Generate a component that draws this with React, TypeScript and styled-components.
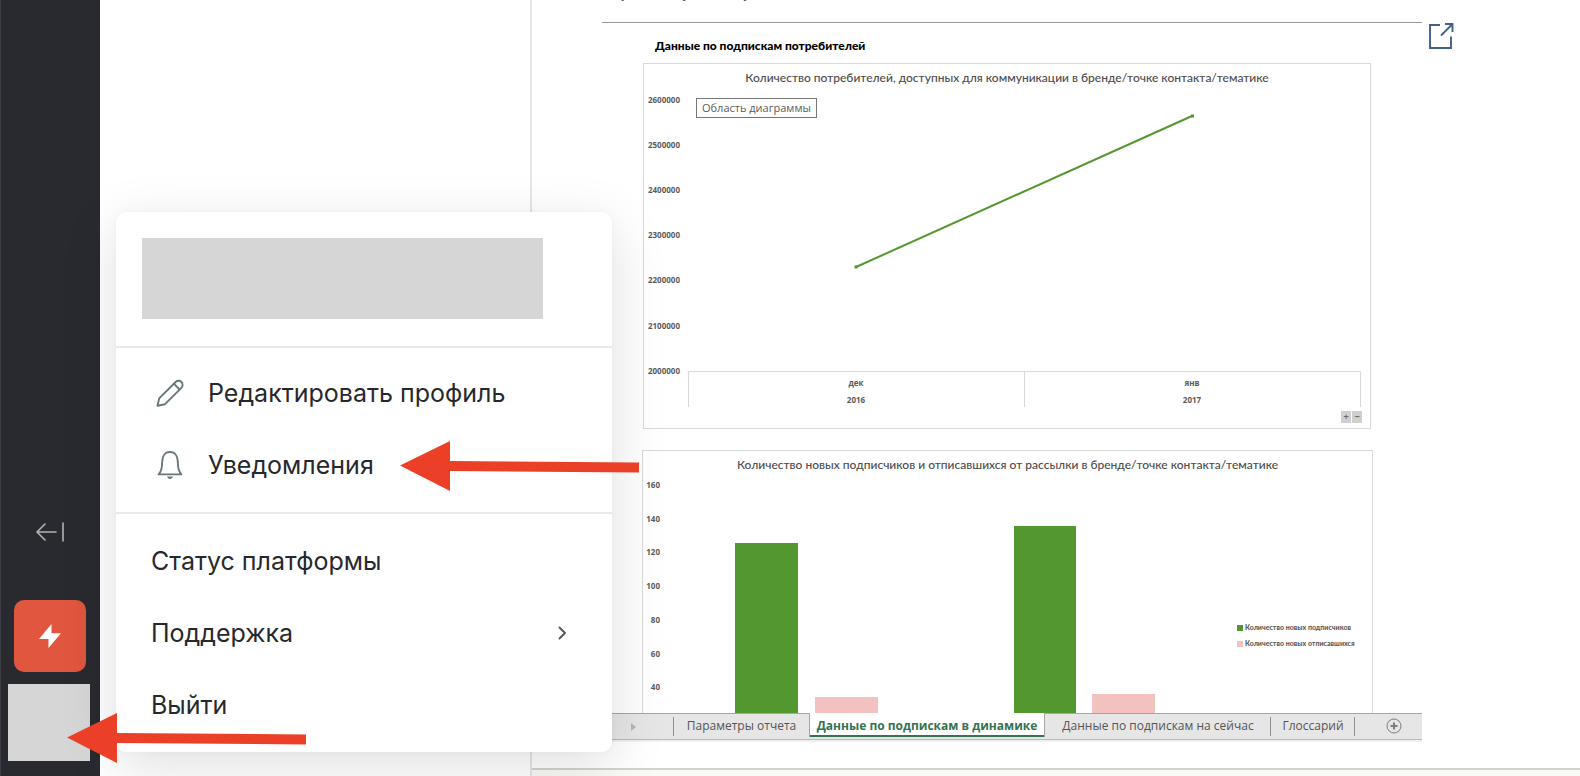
import React from 'react';
import styled, { createGlobalStyle } from 'styled-components';

const GlobalStyle = createGlobalStyle`
  *, *::before, *::after { box-sizing: border-box; }
  body { margin: 0; background: #fff; font-family: Inter, 'Liberation Sans', sans-serif; color: #27282d; }
  button { font: inherit; color: inherit; border: 0; background: none; padding: 0; cursor: pointer; }
  svg { display: block; }
`;

const CHART_FONT = "Lato, 'Open Sans', sans-serif";
const SHEET_FONT = "'Open Sans', 'Noto Sans', sans-serif";
const GREEN = '#52982f';
const PINK = '#f4c1c1';

const Page = styled.div`
  position: relative;
  display: flex;
  min-height: 100vh;
  overflow: hidden;
`;

const Sidebar = styled.nav`
  flex: none;
  width: 100px;
  padding-bottom: 15px;
  display: flex;
  flex-direction: column;
  align-items: center;
  justify-content: flex-end;
  background: #292a2f;
  box-shadow: inset 1px 0 0 #3d3e43;
`;

const CollapseButton = styled.button`
  margin-bottom: 58px;
`;

const BoltButton = styled.button`
  display: grid;
  place-items: center;
  width: 72px;
  height: 72px;
  margin-bottom: 12px;
  border-radius: 10px;
  background: #e0563f;
`;

const Avatar = styled.button`
  width: 82px;
  height: 77px;
  margin-right: 2px;
  background: #d6d6d6;
`;

const ListPane = styled.aside`
  flex: none;
  width: 432px;
  border-right: 2px solid #e6e6e6;
`;

const Main = styled.main`
  flex: 1;
  min-width: 0;
  display: flex;
  flex-direction: column;
  overflow: hidden;
`;

const ReportRow = styled.div`
  display: flex;
  align-items: flex-start;
  gap: 6px;
  padding: 0 40px 28px 70px;
`;

const Report = styled.article`
  flex: 0 1 820px;
  min-width: 0;
  display: flex;
  flex-direction: column;
`;

const ReportTitle = styled.h1`
  margin: -26px 0 0;
  padding-bottom: 20px;
  border-bottom: 1px solid #979797;
  font-size: 24px;
  line-height: 28px;
  font-weight: 400;
`;

const OpenLink = styled.a`
  margin-top: 22px;
  color: #3f6388;
`;

const SheetTitle = styled.h2`
  margin: 0;
  padding: 13px 53px 7px;
  font: 900 12px/20px ${CHART_FONT};
  color: #000;
`;

const ChartCard = styled.figure<{ $cut?: boolean }>`
  position: relative;
  margin: ${p => (p.$cut ? '21px 49px 0 40px' : '0 51px 0 41px')};
  border: 1px solid #d9d9d9;
  border-bottom-width: ${p => (p.$cut ? 0 : 1)}px;
`;

const ChartTitle = styled.figcaption`
  text-align: center;
  font: 500 12px/28px ${CHART_FONT};
  color: #4c4c4c;
`;

const Plot = styled.svg`
  width: 100%;
  height: auto;
`;

const AxisText = styled.text`
  font: 700 8px ${SHEET_FONT};
  fill: #5a5a5a;
`;

const LegendText = styled.text`
  font: 900 7px ${CHART_FONT};
  fill: #5a5a5a;
`;

const Tooltip = styled.div`
  position: absolute;
  left: 52px;
  top: 34px;
  padding: 0 5px;
  border: 1px solid #767676;
  background: #fff;
  font: 11px/18px ${SHEET_FONT};
  color: #5c5c5c;
`;

const DrillButtons = styled.div`
  position: absolute;
  right: 8px;
  bottom: 5px;
  display: flex;
  gap: 1px;
`;

const DrillButton = styled.button`
  width: 10px;
  height: 12px;
  background: #cfcfcf;
  font: 700 9px/10px ${SHEET_FONT};
  color: #666;
`;

const TabBar = styled.div`
  display: flex;
  height: 27px;
  background: #e6e6e6;
  border-top: 1px solid #a6a6a6;
  border-bottom: 1px solid #b9b9b9;
  box-shadow: 0 2px 0 #f0f0f0;
  font: 12px/24px ${SHEET_FONT};
  color: #555;
`;

const TabScroll = styled.button`
  width: 71px;
  display: flex;
  align-items: center;
  padding-left: 29px;
`;

const Tab = styled.button<{ $width: number; $active?: boolean; $ruled?: boolean }>`
  position: relative;
  flex: 0 1 ${p => p.$width}px;
  height: 24px;
  white-space: nowrap;
  ${p =>
    p.$active &&
    `margin-top: -1px;
     padding-top: 1px;
     background: #fff;
     border: solid #a6a6a6;
     border-width: 0 1px;
     box-shadow: inset 0 -2px 0 #33734f;
     font-weight: 700;
     color: #33734f;`}
  ${p =>
    p.$ruled &&
    `&::after {
       content: '';
       position: absolute;
       right: 0;
       top: 3px;
       bottom: 2px;
       width: 1px;
       background: #8f8f8f;
     }`}
`;

const TabRule = styled.span`
  width: 1px;
  height: 19px;
  margin-top: 3px;
  background: #8f8f8f;
`;

const AddSheet = styled.button`
  margin: 4px 0 0 31px;
  height: 16px;
`;

const Footer = styled.footer`
  flex: 1;
  min-height: 8px;
  border-top: 2px solid #d2d2d2;
  background: #f9f9f6;
`;

const Menu = styled.div`
  position: absolute;
  left: 116px;
  bottom: 24px;
  width: 496px;
  padding-bottom: 11px;
  border-radius: 11px;
  background: #fff;
  box-shadow: 0 14px 56px rgba(0, 0, 0, 0.13), 0 0 6px rgba(0, 0, 0, 0.03);
`;

const UserBlock = styled.div`
  padding: 26px 69px 27px 26px;
`;

const UserMask = styled.div`
  height: 81px;
  background: #d6d6d6;
`;

const MenuGroup = styled.div`
  padding: 9px 0 11px;
  border-top: 2px solid #e9e9ea;
  & + & { padding: 11px 0 0; }
`;

const MenuItem = styled.button`
  display: flex;
  align-items: center;
  width: 100%;
  height: 72px;
  padding: 0 46px 0 35px;
  font-size: 25px;
  text-align: left;
  color: #27282d;
`;

const ItemIcon = styled.span`
  width: 28px;
  margin: 0 24px 0 5px;
  color: #68777b;
`;

const ItemLabel = styled.span`
  flex: 1;
`;

const Pointer = styled.svg<{ $left: number; $bottom: number }>`
  position: absolute;
  left: ${p => p.$left}px;
  bottom: ${p => p.$bottom}px;
  pointer-events: none;
`;

const PencilIcon = () => (
  <svg width="28" height="28" viewBox="0 0 28 28" fill="none" stroke="currentColor" strokeWidth="1.9" strokeLinejoin="round" strokeLinecap="round">
    <path d="M1.5 26.8 3.2 19.400 19.600 3a4.100 4.100 0 0 1 5.800 0 4.100 4.100 0 0 1 0 5.800L9 25.200Z" />
    <path d="M18 4.800l5.700 5.700" />
  </svg>
);

const BellIcon = () => (
  <svg width="28" height="30" viewBox="0 0 28 30" fill="none" stroke="currentColor" strokeWidth="1.9" strokeLinejoin="round" strokeLinecap="round">
    <path d="M2.600 24.400C5.400 21.600 6 18 6.100 13.600 6.300 6 8 2 14 2s7.700 4 7.900 11.600C22 18 22.600 21.600 25.400 24.400Z" />
    <path d="M11 26.600h6c-.5 1.700-1.600 2.400-3 2.400s-2.500-.7-3-2.400Z" fill="currentColor" stroke="none" />
  </svg>
);

const RedArrow = ({ left, bottom }: { left: number; bottom: number }) => (
  <Pointer $left={left} $bottom={bottom} width="240" height="50" viewBox="0 0 240 50" fill="#eb4027" aria-hidden="true">
    <path d="M0 24.500 50 0V20L239 21.500V31.500L50 30V50Z" />
  </Pointer>
);

const subscriberLabels = [2600000, 2500000, 2400000, 2300000, 2200000, 2100000, 2000000];
const months = [
  { x: 856, month: 'дек', year: '2016' },
  { x: 1192, month: 'янв', year: '2017' },
];
const flowLabels = [160, 140, 120, 100, 80, 60, 40];
const bars = [
  { x: 735, y: 543, w: 63, fill: GREEN },
  { x: 815, y: 697, w: 63, fill: PINK },
  { x: 1014, y: 526, w: 62, fill: GREEN },
  { x: 1092, y: 694, w: 63, fill: PINK },
];
const legend = [
  { y: 627, label: 'Количество новых подписчиков', fill: GREEN },
  { y: 643, label: 'Количество новых отписавшихся', fill: PINK },
];

export default function App() {
  return (
    <Page>
      <GlobalStyle />
      <Sidebar>
        <CollapseButton aria-label="Свернуть">
          <svg width="28" height="20" viewBox="0 0 28 20" fill="none" stroke="#b4b4b6" strokeWidth="1.6" strokeLinecap="round" strokeLinejoin="round">
            <path d="M20 10H1M9 2 1 10l8 8" />
            <path d="M27 1v18" />
          </svg>
        </CollapseButton>
        <BoltButton aria-label="Быстрые действия">
          <svg width="24" height="24" viewBox="0 0 24 24" fill="#fff">
            <path d="M13.500 0 1 15h9.500L10.500 24 23 9.200h-9.500Z" />
          </svg>
        </BoltButton>
        <Avatar aria-label="Профиль" />
      </Sidebar>
      <ListPane />
      <Main>
        <ReportRow>
          <Report>
            <ReportTitle>Пример витрины</ReportTitle>
            <SheetTitle>Данные по подпискам потребителей</SheetTitle>
            <ChartCard>
              <ChartTitle>Количество потребителей, доступных для коммуникации в бренде/точке контакта/тематике</ChartTitle>
              <Plot viewBox="644 92 726 336">
                {subscriberLabels.map((v, i) => (
                  <AxisText key={v} x="680" y={102.500 + i * 45.200} textAnchor="end">{v}</AxisText>
                ))}
                <path d="M688.500 407V371.500H1360.500V407M1024.500 371.500V407" fill="none" stroke="#d9d9d9" />
                <path d="M856 267 1192 116" stroke={GREEN} strokeWidth="2" />
                <rect x="854.500" y="265.500" width="3" height="3" fill={GREEN} />
                <rect x="1191" y="114.500" width="3" height="3" fill={GREEN} />
                {months.map(m => (
                  <g key={m.x} textAnchor="middle">
                    <AxisText x={m.x} y="386">{m.month}</AxisText>
                    <AxisText x={m.x} y="403">{m.year}</AxisText>
                  </g>
                ))}
              </Plot>
              <Tooltip role="tooltip">Область диаграммы</Tooltip>
              <DrillButtons>
                <DrillButton>+</DrillButton>
                <DrillButton>−</DrillButton>
              </DrillButtons>
            </ChartCard>
            <ChartCard $cut>
              <ChartTitle>Количество новых подписчиков и отписавшихся от рассылки в бренде/точке контакта/тематике</ChartTitle>
              <Plot viewBox="643 479 729 234">
                {flowLabels.map((v, i) => (
                  <AxisText key={v} x="660" y={488 + i * 33.700} textAnchor="end">{v}</AxisText>
                ))}
                {bars.map(b => (
                  <rect key={b.x} x={b.x} y={b.y} width={b.w} height={713 - b.y} fill={b.fill} />
                ))}
                {legend.map(l => (
                  <g key={l.y}>
                    <rect x="1237" y={l.y - 2} width="6" height="6" fill={l.fill} />
                    <LegendText x="1245" y={l.y + 3}>{l.label}</LegendText>
                  </g>
                ))}
              </Plot>
            </ChartCard>
            <TabBar>
              <TabScroll aria-label="Следующие листы">
                <svg width="5" height="8" viewBox="0 0 5 8" fill="#b5b5b5"><path d="M0 0 5 4 0 8Z" /></svg>
              </TabScroll>
              <TabRule />
              <Tab $width={135}>Параметры отчета</Tab>
              <Tab $width={236} $active>Данные по подпискам в динамике</Tab>
              <Tab $width={226} $ruled>Данные по подпискам на сейчас</Tab>
              <Tab $width={84} $ruled>Глоссарий</Tab>
              <AddSheet aria-label="Добавить лист">
                <svg width="16" height="16" viewBox="0 0 16 16" fill="none" stroke="#7d7d7d">
                  <circle cx="8" cy="8" r="7" />
                  <path d="M8 4.500v7M4.500 8h7" strokeWidth="2" />
                </svg>
              </AddSheet>
            </TabBar>
          </Report>
          <OpenLink href="#report" aria-label="Открыть отчет">
            <svg width="26" height="28" viewBox="0 0 26 28" fill="none" stroke="currentColor" strokeWidth="1.9">
              <path d="M12 3H2v23h21V14.500" />
              <path d="M13 13.500 24 2.500M17 2h7.500v8" />
            </svg>
          </OpenLink>
        </ReportRow>
        <Footer />
      </Main>
      <Menu>
        <UserBlock>
          <UserMask />
        </UserBlock>
        <MenuGroup>
          <MenuItem>
            <ItemIcon><PencilIcon /></ItemIcon>
            <ItemLabel>Редактировать профиль</ItemLabel>
          </MenuItem>
          <MenuItem>
            <ItemIcon><BellIcon /></ItemIcon>
            <ItemLabel>Уведомления</ItemLabel>
          </MenuItem>
        </MenuGroup>
        <MenuGroup>
          <MenuItem><ItemLabel>Статус платформы</ItemLabel></MenuItem>
          <MenuItem>
            <ItemLabel>Поддержка</ItemLabel>
            <svg width="8" height="14" viewBox="0 0 8 14" fill="none" stroke="#4d5558" strokeWidth="1.800" strokeLinecap="round" strokeLinejoin="round">
              <path d="M1.500 1.500 7 7l-5.500 5.500" />
            </svg>
          </MenuItem>
          <MenuItem><ItemLabel>Выйти</ItemLabel></MenuItem>
        </MenuGroup>
      </Menu>
      <RedArrow left={400} bottom={285} />
      <RedArrow left={67} bottom={13} />
    </Page>
  );
}
